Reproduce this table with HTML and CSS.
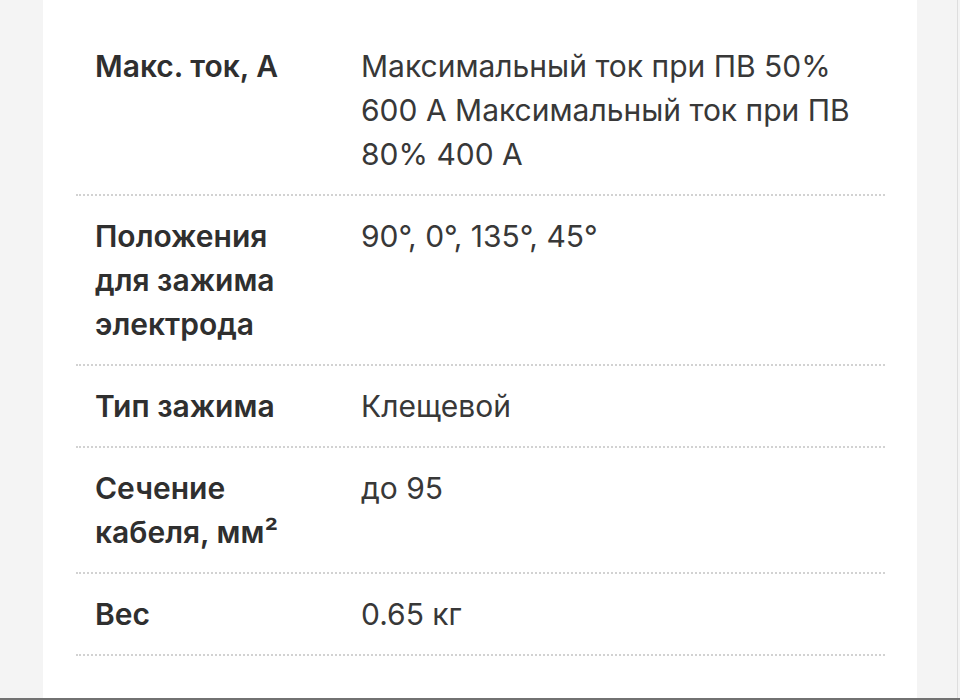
FILE: index.html
```html
<!DOCTYPE html>
<html lang="ru">
<head>
<meta charset="utf-8">
<title>Характеристики</title>
<link rel="stylesheet" href="styles.css">
</head>
<body>
<div class="screen">
  <section class="panel">
    <dl class="specs">
      <div class="row">
        <dt class="label">Макс. ток, А</dt>
        <dd class="value">Максимальный ток при ПВ 50% 600 А Максимальный ток при ПВ 80% 400 А</dd>
      </div>
      <div class="row">
        <dt class="label">Положения для зажима электрода</dt>
        <dd class="value">90°, 0°, 135°, 45°</dd>
      </div>
      <div class="row">
        <dt class="label">Тип зажима</dt>
        <dd class="value">Клещевой</dd>
      </div>
      <div class="row">
        <dt class="label">Сечение кабеля, мм²</dt>
        <dd class="value">до 95</dd>
      </div>
      <div class="row">
        <dt class="label">Вес</dt>
        <dd class="value">0.65 кг</dd>
      </div>
    </dl>
  </section>
  <div class="edge"></div>
</div>
</body>
</html>
```
FILE: styles.css
```css
html, body {
  margin: 0;
  padding: 0;
}
body {
  width: 960px;
  height: 700px;
  overflow: hidden;
  background: #f4f4f4;
  font-family: "Inter", "Noto Sans", sans-serif;
}
.screen {
  display: flex;
  box-sizing: border-box;
  width: 960px;
  height: 700px;
  padding: 0 2px 0 43px;
  border-bottom: 2px solid #727272;
  background: #f4f4f4;
}
.panel {
  box-sizing: border-box;
  width: 874px;
  height: 100%;
  padding: 26px 32px 0 33px;
  background: #ffffff;
}
.edge {
  margin-left: auto;
  width: 1px;
  background: #dedede;
}
.specs {
  margin: 0;
  padding: 0;
}
.row {
  display: grid;
  grid-template-columns: 220px 1fr;
  column-gap: 46px;
  padding: 18px 19px;
  border-bottom: 2px dotted #d2d2d2;
}
.label,
.value {
  margin: 0;
  font-size: 30px;
  line-height: 44px;
}
.label {
  font-weight: 600;
  color: #2f2f2f;
}
.value {
  font-weight: 400;
  color: #383838;
}
```
